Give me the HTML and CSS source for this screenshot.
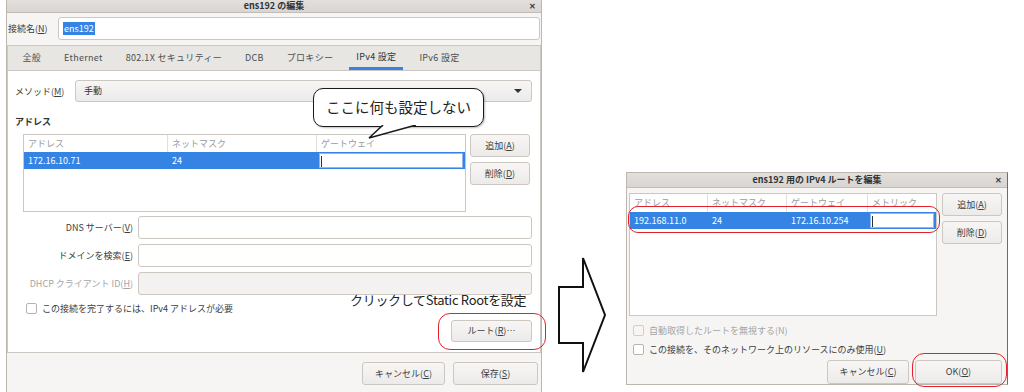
FILE: index.html
```html
<!DOCTYPE html>
<html>
<head>
	<title>ens192 の編集</title>
	<meta charset="utf-8">
	<link rel="stylesheet" href="styles.css">
</head>
<body>
<div class="screen">
	<div class="dlg main">
		<div class="titlebar">ens192 の編集<span class="close">&#10005;</span></div>
		<div class="namerow">
			<span class="lbl">接続名(<u>N</u>)</span>
			<div class="entry"><span class="selected">ens192</span></div>
		</div>
		<div class="notebook">
			<div class="tabs">
				<span class="tab">全般</span>
				<span class="tab">Ethernet</span>
				<span class="tab">802.1X セキュリティー</span>
				<span class="tab">DCB</span>
				<span class="tab">プロキシー</span>
				<span class="tab active">IPv4 設定</span>
				<span class="tab">IPv6 設定</span>
			</div>
			<div class="page">
				<div class="method">
					<span class="mlbl">メソッド(<u>M</u>)</span>
					<div class="combo">手動<span class="caret"></span></div>
				</div>
				<div class="section">アドレス</div>
				<div class="addr">
					<div class="tree wide">
						<div class="thead"><span>アドレス</span><span>ネットマスク</span><span>ゲートウェイ</span></div>
						<div class="trow"><span>172.16.10.71</span><span>24</span><span class="cell"><i class="cursor"></i></span></div>
					</div>
					<div class="side">
						<div class="btn">追加(<u>A</u>)</div>
						<div class="btn">削除(<u>D</u>)</div>
					</div>
				</div>
				<div class="form">
					<span class="flbl">DNS サーバー(<u>V</u>)</span><div class="entry"></div>
					<span class="flbl">ドメインを検索(<u>E</u>)</span><div class="entry"></div>
					<span class="flbl off">DHCP クライアント ID(<u>H</u>)</span><div class="entry off"></div>
				</div>
				<div class="check"><span class="box"></span>この接続を完了するには、IPv4 アドレスが必要</div>
				<div class="routes"><div class="btn route">ルート(<u>R</u>)…</div></div>
			</div>
		</div>
		<div class="footer">
			<div class="btn cancel">キャンセル(<u>C</u>)</div>
			<div class="btn save">保存(<u>S</u>)</div>
		</div>

		<div class="callout">ここに何も設定しない
			<svg class="tail" width="60" height="16" viewBox="0 0 60 16">
				<polygon points="18,0 3,13 51,0" fill="#fff"/>
				<polyline points="17,0 3,13 50,0" fill="none" stroke="#1a1a1a" stroke-width="1.5"/>
			</svg>
		</div>
		<div class="note">クリックしてStatic Rootを設定</div>
		<div class="mark mark-route"></div>
	</div>

	<svg class="arrow" width="50" height="118" viewBox="0 0 50 118">
		<polygon points="2,31 26,31 26,2 48,59 26,116 26,87 2,87" fill="#fff" stroke="#111" stroke-width="2"/>
	</svg>

	<div class="dlg route-dlg">
		<div class="titlebar small">ens192 用の IPv4 ルートを編集<span class="close">&#10005;</span></div>
		<div class="rbody">
			<div class="tree narrow">
				<div class="thead"><span>アドレス</span><span>ネットマスク</span><span>ゲートウェイ</span><span>メトリック</span></div>
				<div class="trow"><span>192.168.11.0</span><span>24</span><span>172.16.10.254</span><span class="cell"><i class="cursor"></i></span></div>
			</div>
			<div class="side">
				<div class="btn">追加(<u>A</u>)</div>
				<div class="btn">削除(<u>D</u>)</div>
			</div>
		</div>
		<div class="check off first"><span class="box"></span>自動取得したルートを無視する(N)</div>
		<div class="check"><span class="box"></span>この接続を、そのネットワーク上のリソースにのみ使用(<u>U</u>)</div>
		<div class="footer rfoot">
			<div class="btn rcancel">キャンセル(<u>C</u>)</div>
			<div class="btn ok">OK(<u>O</u>)</div>
		</div>
		<div class="mark mark-row"></div>
		<div class="mark mark-ok"></div>
	</div>
</div>
</body>
</html>
```

FILE: styles.css
```css
body {
	margin: 0;
	background: #fff;
	font-family: "Noto Sans CJK JP", "Noto Sans", sans-serif;
	font-size: 9px;
	line-height: 13px;
	color: #2e3436;
}
u { text-underline-offset: 1px; }
.screen {
	display: flex;
	align-items: flex-start;
}
.dlg {
	position: relative;
	box-sizing: border-box;
	background: #f6f5f4;
	border: 1px solid #bdb6af;
}
.main {
	width: 536px;
	height: 393px;
	margin-left: 6px;
	border-top: none;
	border-bottom: none;
	display: flex;
	flex-direction: column;
}
.titlebar {
	position: relative;
	flex: none;
	height: 12px;
	line-height: 12px;
	text-align: center;
	font-weight: bold;
	background: linear-gradient(#e2dfdc, #d9d5d1);
	border-bottom: 1px solid #c2bcb6;
}
.titlebar.small {
	height: 14px;
	line-height: 14px;
}
.close {
	position: absolute;
	right: 5px;
	top: 0;
	font-size: 8px;
	font-weight: bold;
	color: #3b3f40;
}
.namerow {
	display: flex;
	align-items: center;
	margin-top: 4px;
	height: 23px;
}
.lbl {
	width: 50px;
	padding-left: 1px;
	color: #3c4042;
}
.entry {
	box-sizing: border-box;
	flex: 1;
	height: 23px;
	background: #fff;
	border: 1px solid #cdc7c2;
	border-radius: 3px;
	display: flex;
	align-items: center;
	padding-left: 4px;
}
.namerow .entry { margin-right: 1px; }
.selected {
	background: #3584e4;
	color: #fff;
	padding: 0 1px;
}
.entry.off { background: #f3f2f1; }

.notebook {
	box-sizing: border-box;
	margin-top: 5px;
	height: 308px;
	border: 1px solid #cdc7c2;
	display: flex;
	flex-direction: column;
}
.tabs {
	flex: none;
	height: 24px;
	display: flex;
	padding-left: 3px;
	background: #e8e6e3;
	border-bottom: 1px solid #cdc7c2;
}
.tab {
	box-sizing: border-box;
	padding: 0 7px;
	margin: 0 4.5px;
	line-height: 24px;
	letter-spacing: 0.3px;
	color: #4a4f51;
}
.tab.active {
	color: #2e3436;
	border-bottom: 3px solid #3584e4;
	line-height: 22px;
}
.page {
	flex: 1;
	background: #fff;
	padding: 9px 8px 0 7px;
}
.method {
	display: flex;
	align-items: center;
	height: 22px;
}
.mlbl { width: 60px; color: #3c4042; }
.combo {
	position: relative;
	box-sizing: border-box;
	flex: 1;
	height: 22px;
	line-height: 20px;
	padding-left: 8px;
	background: linear-gradient(#f7f6f5, #edebe9);
	border: 1px solid #cdc7c2;
	border-radius: 3px;
}
.caret {
	position: absolute;
	right: 9px;
	top: 8px;
	border-left: 4px solid transparent;
	border-right: 4px solid transparent;
	border-top: 4px solid #2e3436;
}
.section {
	margin-top: 13px;
	height: 14px;
	font-weight: bold;
}
.addr {
	display: flex;
	margin-top: 5px;
	margin-left: 8px;
	gap: 4px;
}
.tree {
	box-sizing: border-box;
	background: #fff;
	border: 1px solid #cdc7c2;
}
.tree.wide {
	width: 443px;
	height: 78px;
}
.tree.wide .thead, .tree.wide .trow { grid-template-columns: 144px 149px 1fr; }
.thead, .trow {
	display: grid;
	height: 17px;
	line-height: 17px;
}
.thead span {
	padding-left: 4px;
	color: #9a9c9d;
	border-right: 1px solid #e2dfdc;
}
.thead span:last-child { border-right: none; }
.trow {
	background: #3584e4;
	color: #fff;
}
.trow span { padding-left: 4px; }
.trow .cell {
	position: relative;
	margin: 0 1px 0 1px;
	background: #fff;
	border: 1px solid #3584e4;
	box-shadow: inset 0 0 0 1px #8fb8ee;
	padding: 0;
}
.cursor {
	position: absolute;
	left: 2px;
	top: 3px;
	width: 1px;
	height: 11px;
	background: #2e3436;
}
.side {
	display: flex;
	flex-direction: column;
	gap: 5px;
	width: 60px;
}
.btn {
	box-sizing: border-box;
	height: 23px;
	line-height: 21px;
	text-align: center;
	color: #3c4042;
	background: linear-gradient(#f7f6f5, #edebe9);
	border: 1px solid #cdc7c2;
	border-radius: 3px;
}
.form {
	display: grid;
	grid-template-columns: 118px 1fr;
	column-gap: 5px;
	row-gap: 5px;
	margin-top: 4px;
	align-items: center;
}
.flbl {
	text-align: right;
	color: #3c4042;
}
.flbl.off { color: #a3a5a6; }
.check {
	display: flex;
	align-items: center;
	height: 14px;
	margin-top: 6px;
	margin-left: 11px;
	color: #3c4042;
}
.box {
	box-sizing: border-box;
	width: 11px;
	height: 11px;
	margin-right: 5px;
	background: #fff;
	border: 1px solid #b9b3ad;
	border-radius: 2px;
}
.routes {
	display: flex;
	justify-content: flex-end;
	margin-top: 5px;
}
.btn.route {
	width: 81px;
	height: 22px;
	line-height: 20px;
}
.footer {
	display: flex;
	justify-content: flex-end;
	gap: 8px;
	margin-top: 9px;
	padding-right: 3px;
}
.cancel { width: 83px; }
.save { width: 85px; }

.callout {
	position: absolute;
	left: 306px;
	top: 88px;
	box-sizing: border-box;
	width: 171px;
	height: 39px;
	border: 1.5px solid #1a1a1a;
	border-radius: 10px;
	background: #fff;
	font-size: 14.5px;
	line-height: 36px;
	text-align: center;
	color: #222;
	box-shadow: 1px 1px 2px rgba(0,0,0,0.25);
}
.tail {
	position: absolute;
	left: 52px;
	top: 36px;
}
.note {
	position: absolute;
	left: 343px;
	top: 291px;
	font-size: 13px;
	line-height: 17px;
	color: #222;
	letter-spacing: -0.3px;
}
.mark {
	position: absolute;
	box-sizing: border-box;
	border: 1.5px solid #e3212b;
	border-radius: 12px;
}
.mark-route {
	left: 431px;
	top: 313px;
	width: 108px;
	height: 37px;
}

.arrow {
	flex: none;
	margin-left: 15px;
	margin-top: 256px;
}

.route-dlg {
	width: 382px;
	height: 213px;
	margin-left: 19px;
	margin-top: 172px;
	border-right-color: #6f6b67;
}
.rbody {
	display: flex;
	gap: 5px;
	padding: 5px 0 0 2px;
}
.tree.narrow {
	width: 308px;
	height: 123px;
}
.tree.narrow .thead, .tree.narrow .trow {
	grid-template-columns: 78px 79px 81px 1fr;
}
.tree.narrow .thead { height: 18px; line-height: 18px; }
.tree.narrow .trow { height: 17px; }
.route-dlg .check {
	margin-left: 6px;
	margin-top: 5px;
}
.route-dlg .check.first { margin-top: 7px; }
.check.off { color: #a3a5a6; }
.check.off .box { background: #f6f5f4; border-color: #d3cec9; }
.rfoot {
	margin-top: 4px;
	gap: 6px;
	padding-right: 5px;
}
.rcancel { width: 82px; height: 24px; line-height: 22px; }
.ok { width: 87px; height: 24px; line-height: 22px; }
.mark-row {
	left: 1px;
	top: 33px;
	width: 312px;
	height: 27px;
	border-radius: 10px;
}
.mark-ok {
	left: 285px;
	top: 180px;
	width: 95px;
	height: 34px;
}
```
